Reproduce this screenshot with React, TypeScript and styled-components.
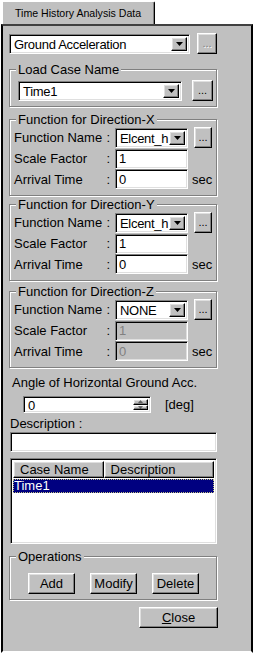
import type { FC } from 'react'
import styled, { createGlobalStyle } from 'styled-components'

const GlobalStyle = createGlobalStyle`
  html, body {
    margin: 0;
    padding: 0;
    background: #fff;
  }
  body {
    font-family: "Liberation Sans", Arial, sans-serif;
    font-size: 13px;
    color: #000;
  }
`

const directions = [
  { axis: 'X', fn: 'Elcent_h', scale: '1', arrival: '0', disabled: false, mt: 5 },
  { axis: 'Y', fn: 'Elcent_h', scale: '1', arrival: '0', disabled: false, mt: 1 },
  { axis: 'Z', fn: 'NONE', scale: '1', arrival: '0', disabled: true, mt: 3 },
]

const App: FC = () => {
  return (
    <Window>
      <GlobalStyle />
      <TabStrip>
        <Tab>Time History Analysis Data</Tab>
      </TabStrip>
      <Panel>
        <Row $gap={7}>
          <Combo value="Ground Acceleration" width={182} />
          <DotsButton $w={20} $h={21} $disabled>...</DotsButton>
        </Row>

        <Group $mt={8} $h={45} $pt={3}>
          <Legend>Load Case Name</Legend>
          <Row $gap={10} $pl={8}>
            <Combo value="Time1" width={164} />
            <DotsButton $w={21} $h={21}>...</DotsButton>
          </Row>
        </Group>

        {directions.map((d) => (
          <DirectionGroup key={d.axis} {...d} />
        ))}

        <Caption $mt={7} $pl={3}>Angle of Horizontal Ground Acc.</Caption>
        <Row $gap={14} $pl={14} $mt={6}>
          <Spin value="0" />
          <span>[deg]</span>
        </Row>

        <Caption $mt={3} $pl={1}>Description :</Caption>
        <Field $w={207} $mt={1} $ml={1} readOnly value="" />

        <ListView>
          <ListHeader>
            <HeaderCell $w={91}>Case Name</HeaderCell>
            <HeaderCell $w={111}>Description</HeaderCell>
          </ListHeader>
          <ListRow $selected>Time1</ListRow>
        </ListView>

        <Group $mt={5} $h={51} $pt={9}>
          <Legend>Operations</Legend>
          <Row $gap={15} $pl={18}>
            <PushButton $w={47}>Add</PushButton>
            <PushButton $w={47}>Modify</PushButton>
            <PushButton $w={47}>Delete</PushButton>
          </Row>
        </Group>

        <Footer>
          <PushButton $w={79}>
            <u>C</u>lose
          </PushButton>
        </Footer>
      </Panel>
    </Window>
  )
}

const DirectionGroup: FC<DirectionProps> = (props) => {
  const { axis, fn, scale, arrival, disabled, mt } = props

  return (
    <Group $mt={mt} $h={84} $pt={0}>
      <Legend>Function for Direction-{axis}</Legend>
      <FormRow $h={21}>
        <FieldLabel>
          <span>Function Name</span>
          <span>:</span>
        </FieldLabel>
        <Combo value={fn} width={73} />
        <DotsButton $w={18} $h={21} $ml={6}>...</DotsButton>
      </FormRow>
      <FormRow $h={21}>
        <FieldLabel>
          <span>Scale Factor</span>
          <span>:</span>
        </FieldLabel>
        <Field $w={73} readOnly disabled={disabled} value={scale} />
      </FormRow>
      <FormRow $h={20}>
        <FieldLabel>
          <span>Arrival Time</span>
          <span>:</span>
        </FieldLabel>
        <Field $w={73} readOnly disabled={disabled} value={arrival} />
        <Unit>sec</Unit>
      </FormRow>
    </Group>
  )
}

const Combo: FC<{ value: string; width: number }> = ({ value, width }) => (
  <ComboBox $w={width}>
    <ComboText>{value}</ComboText>
    <ArrowButton>
      <svg width="7" height="4" viewBox="0 0 7 4">
        <path d="M0 0h7L3.5 4z" fill="#000" />
      </svg>
    </ArrowButton>
  </ComboBox>
)

const Spin: FC<{ value: string }> = ({ value }) => (
  <SpinBox>
    <SpinText>{value}</SpinText>
    <SpinButtons>
      <SpinArrow>
        <svg width="5" height="3" viewBox="0 0 5 3">
          <path d="M2.5 0L5 3H0z" fill="#000" />
        </svg>
      </SpinArrow>
      <SpinArrow>
        <svg width="5" height="3" viewBox="0 0 5 3">
          <path d="M0 0h5L2.5 3z" fill="#000" />
        </svg>
      </SpinArrow>
    </SpinButtons>
  </SpinBox>
)

interface DirectionProps {
  axis: string
  fn: string
  scale: string
  arrival: string
  disabled: boolean
  mt: number
}

const raised = `
  border: 1px solid;
  border-color: #fff #000 #000 #fff;
  box-shadow: inset -1px -1px 0 #808080, inset 1px 1px 0 #dfdfdf;
  background: #c0c0c0;
`

const sunken = `
  border: 1px solid;
  border-color: #808080 #fff #fff #808080;
  box-shadow: inset 1px 1px 0 #000, inset -1px -1px 0 #dfdfdf;
`

const Window = styled.div`
  width: 255px;
  height: 655px;
  padding-top: 1px;
  box-sizing: border-box;
`

const TabStrip = styled.div`
  display: flex;
  padding-left: 2px;
`

const Tab = styled.div`
  box-sizing: border-box;
  width: 153px;
  height: 23px;
  padding: 5px 0 0 12px;
  font-size: 10.6px;
  background: #c0c0c0;
  border-top: 1px solid #fff;
  border-left: 1px solid #fff;
  border-right: 1px solid #000;
  box-shadow: inset -1px 0 0 #808080;
  border-top-right-radius: 2px;
  white-space: nowrap;
`

const Panel = styled.div`
  box-sizing: border-box;
  width: 252px;
  height: 629px;
  margin-left: 1px;
  padding: 7px 34px 0 6px;
  background: #c0c0c0;
  border: 2px solid;
  border-color: #404040 #000 #fff #000;
  display: flex;
  flex-direction: column;
`

const Row = styled.div<{ $gap?: number; $pl?: number; $mt?: number }>`
  display: flex;
  align-items: center;
  gap: ${p => p.$gap ?? 0}px;
  padding-left: ${p => p.$pl ?? 0}px;
  margin-top: ${p => p.$mt ?? 0}px;
`

const Group = styled.fieldset<{ $mt: number; $h: number; $pt: number }>`
  box-sizing: border-box;
  width: 208px;
  height: ${p => p.$h}px;
  margin: ${p => p.$mt}px 0 0 0;
  padding: ${p => p.$pt}px 0 0 0;
  min-inline-size: 0;
  border: 1px solid #808080;
  box-shadow: 1px 1px 0 #fff, inset 1px 1px 0 #fff;
`

const Legend = styled.legend`
  margin-left: 6px;
  padding: 0 2px;
  line-height: 15px;
  background: #c0c0c0;
`

const FormRow = styled.div<{ $h: number }>`
  display: flex;
  align-items: center;
  height: ${p => p.$h}px;
  padding-left: 4px;
`

const FieldLabel = styled.div`
  box-sizing: border-box;
  width: 101px;
  padding-right: 5px;
  display: flex;
  justify-content: space-between;
  white-space: nowrap;
`

const Unit = styled.span`
  margin-left: 4px;
`

const Caption = styled.div<{ $mt: number; $pl: number }>`
  margin-top: ${p => p.$mt}px;
  padding-left: ${p => p.$pl}px;
  line-height: 15px;
  white-space: nowrap;
`

const Field = styled.input<{ $w: number; $mt?: number; $ml?: number }>`
  ${sunken}
  box-sizing: border-box;
  width: ${p => p.$w}px;
  height: 20px;
  margin: ${p => p.$mt ?? 0}px 0 0 ${p => p.$ml ?? 0}px;
  padding: 0 3px;
  font: inherit;
  color: #000;
  background: #fff;
  outline: none;
  &:disabled {
    background: #c0c0c0;
    color: #808080;
  }
`

const ComboBox = styled.div<{ $w: number }>`
  ${sunken}
  box-sizing: border-box;
  width: ${p => p.$w}px;
  height: 20px;
  padding: 2px;
  background: #fff;
  display: flex;
  align-items: stretch;
`

const ComboText = styled.div`
  flex: 1;
  min-width: 0;
  padding-left: 2px;
  line-height: 16px;
  letter-spacing: -0.3px;
  white-space: nowrap;
`

const ArrowButton = styled.div`
  ${raised}
  box-sizing: border-box;
  flex: none;
  width: 16px;
  display: flex;
  align-items: center;
  justify-content: center;
`

const SpinBox = styled.div`
  ${sunken}
  box-sizing: border-box;
  width: 128px;
  height: 17px;
  padding: 2px;
  background: #fff;
  display: flex;
  align-items: stretch;
`

const SpinText = styled.div`
  flex: 1;
  padding-left: 2px;
  line-height: 13px;
  font-size: 13px;
`

const SpinButtons = styled.div`
  width: 15px;
  display: flex;
  flex-direction: column;
`

const SpinArrow = styled.div`
  ${raised}
  box-sizing: border-box;
  flex: 1;
  display: flex;
  align-items: center;
  justify-content: center;
  & svg {
    opacity: 0.5;
  }
`

const DotsButton = styled.div<{ $w: number; $h: number; $ml?: number; $disabled?: boolean }>`
  ${raised}
  box-sizing: border-box;
  flex: none;
  width: ${p => p.$w}px;
  height: ${p => p.$h}px;
  margin-left: ${p => p.$ml ?? 0}px;
  display: flex;
  align-items: center;
  justify-content: center;
  padding-bottom: 2px;
  font-size: 11px;
  color: ${p => (p.$disabled ? '#808080' : '#000')};
  text-shadow: ${p => (p.$disabled ? '1px 1px 0 #fff' : 'none')};
`

const ListView = styled.div`
  ${sunken}
  box-sizing: border-box;
  width: 207px;
  height: 86px;
  margin: 6px 0 0 1px;
  padding: 2px;
  background: #fff;
`

const ListHeader = styled.div`
  display: flex;
  height: 17px;
`

const HeaderCell = styled.div<{ $w: number }>`
  ${raised}
  box-sizing: border-box;
  width: ${p => p.$w}px;
  padding-left: 6px;
  line-height: 15px;
  white-space: nowrap;
`

const ListRow = styled.div<{ $selected?: boolean }>`
  margin-top: 1px;
  height: 14px;
  line-height: 14px;
  padding-left: 1px;
  background: ${p => (p.$selected ? '#000080' : 'transparent')};
  color: ${p => (p.$selected ? '#fff' : '#000')};
  outline: ${p => (p.$selected ? '1px dotted #c0c080' : 'none')};
  outline-offset: -1px;
`

const PushButton = styled.div<{ $w: number }>`
  ${raised}
  box-sizing: border-box;
  width: ${p => p.$w}px;
  height: 21px;
  display: flex;
  align-items: center;
  justify-content: center;
  white-space: nowrap;
`

const Footer = styled.div`
  display: flex;
  justify-content: flex-end;
  margin-top: 7px;
  margin-right: -1px;
`

export default App
